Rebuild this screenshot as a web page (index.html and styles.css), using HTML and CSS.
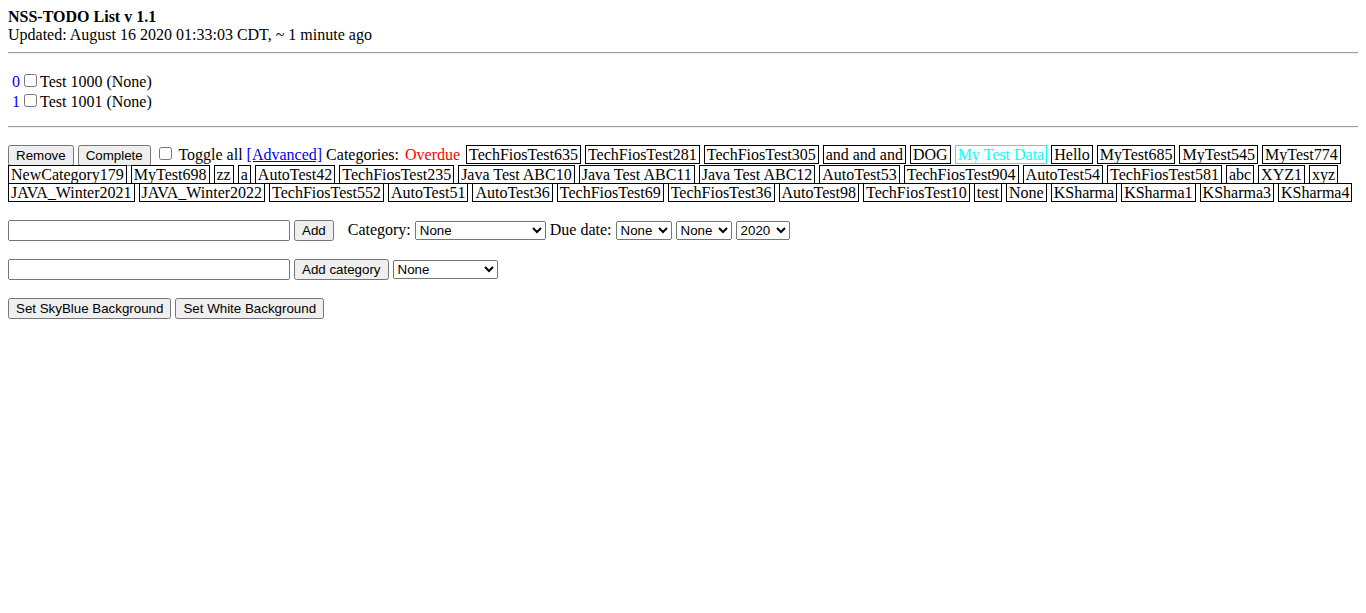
FILE: index.html
```html
<!DOCTYPE html>
<html>
<head>
<meta charset="utf-8">
<title>NSS-TODO List</title>
<link rel="stylesheet" href="styles.css">
</head>
<body>
<b>NSS-TODO List v 1.1</b><br>
Updated: August 16 2020 01:33:03 CDT, ~ 1 minute ago
<hr>
<form>
<p class="items">
 <span class="item"><span class="idx">0</span><input type="checkbox">Test 1000 (None)</span><br>
 <span class="item"><span class="idx">1</span><input type="checkbox">Test 1001 (None)</span><br>
</p>
<hr>
<p class="controls"><button type="button">Remove</button> <button type="button">Complete</button> <input type="checkbox"> Toggle all <a href="#" class="adv">[Advanced]</a> Categories: <span class="overdue">Overdue</span> <span class="cat">TechFiosTest635</span> <span class="cat">TechFiosTest281</span> <span class="cat">TechFiosTest305</span> <span class="cat">and and and</span> <span class="cat">DOG</span> <span class="cat cyan">My Test Data</span> <span class="cat">Hello</span> <span class="cat">MyTest685</span> <span class="cat">MyTest545</span> <span class="cat">MyTest774</span> <span class="cat">NewCategory179</span> <span class="cat">MyTest698</span> <span class="cat">zz</span> <span class="cat">a</span> <span class="cat">AutoTest42</span> <span class="cat">TechFiosTest235</span> <span class="cat">Java Test ABC10</span> <span class="cat">Java Test ABC11</span> <span class="cat">Java Test ABC12</span> <span class="cat">AutoTest53</span> <span class="cat">TechFiosTest904</span> <span class="cat">AutoTest54</span> <span class="cat">TechFiosTest581</span> <span class="cat">abc</span> <span class="cat">XYZ1</span> <span class="cat">xyz</span> <span class="cat">JAVA_Winter2021</span> <span class="cat">JAVA_Winter2022</span> <span class="cat">TechFiosTest552</span> <span class="cat">AutoTest51</span> <span class="cat">AutoTest36</span> <span class="cat">TechFiosTest69</span> <span class="cat">TechFiosTest36</span> <span class="cat">AutoTest98</span> <span class="cat">TechFiosTest10</span> <span class="cat">test</span> <span class="cat">None</span> <span class="cat">KSharma</span> <span class="cat">KSharma1</span> <span class="cat">KSharma3</span> <span class="cat">KSharma4</span></p>
<p class="row"><input type="text" class="wide"> <button type="button">Add</button> &nbsp; <span class="lbl">Category:</span> <select class="catsel"><option>None</option></select> Due date: <select class="dsel"><option>None</option></select> <select class="dsel"><option>None</option></select> <select class="ysel"><option>2020</option></select></p>
<p class="row"><input type="text" class="wide"> <button type="button">Add category</button> <select class="catsel2"><option>None</option></select></p>
<p class="row"><button type="button">Set SkyBlue Background</button> <button type="button">Set White Background</button></p>
</form>
</body>
</html>
```
FILE: styles.css
```css
body {
  font-family: "Liberation Serif", "Times New Roman", serif;
  font-size: 16px;
  color: #000;
  background: #fff;
}
hr {
  border: 0;
  border-top: 1px solid #a0a0a0;
  border-bottom: 1px solid #eee;
}
.items {
  line-height: 20px;
  padding-top: 2px;
  margin-bottom: 14px;
}
.items input {
  margin: 0 3px 2px 4px;
}
.item {
  padding-left: 4px;
}
.idx { color: #0000ff; }
.adv { color: #0000ee; }
.overdue {
  color: #ff0000;
  padding: 0 2px;
}
.controls {
  margin-bottom: 15px;
}
.cat {
  border: 1px solid #000;
  padding: 0 2px;
}
.cat.cyan {
  color: #00ffff;
  border-color: #00ffff;
}
button, input, select {
  font-family: "Liberation Sans", Arial, sans-serif;
  font-size: 13.33px;
}
.row {
  line-height: 23px;
}
.lbl {
  margin-left: 2px;
}
.wide {
  box-sizing: border-box;
  width: 282px;
}
.catsel {
  box-sizing: border-box;
  width: 131px;
}
.dsel {
  box-sizing: border-box;
  width: 56px;
}
.ysel {
  box-sizing: border-box;
  width: 54px;
}
.catsel2 {
  box-sizing: border-box;
  width: 105px;
}
```
